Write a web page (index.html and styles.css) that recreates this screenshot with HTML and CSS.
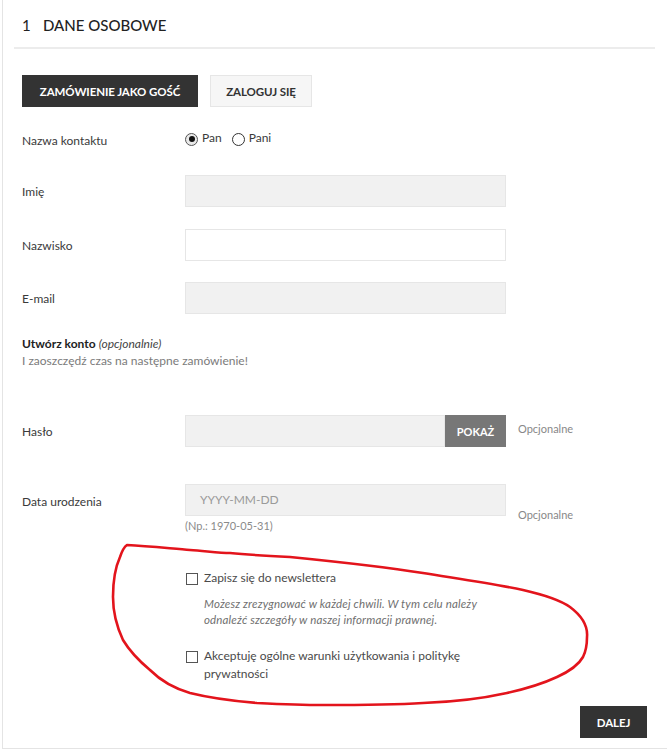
FILE: index.html
```html
<!DOCTYPE html>
<html lang="pl">
<head>
<meta charset="utf-8">
<title>Dane osobowe</title>
<link rel="stylesheet" href="styles.css">
</head>
<body>
<div class="page">
  <div class="card">
    <h1 class="step-title"><span class="step-num">1</span>DANE OSOBOWE</h1>
    <div class="content">
      <div class="tabs">
        <button class="btn btn-dark">ZAMÓWIENIE JAKO GOŚĆ</button>
        <button class="btn btn-light">ZALOGUJ SIĘ</button>
      </div>

      <div class="row row-radio">
        <div class="label">Nazwa kontaktu</div>
        <div class="radios">
          <span class="radio checked"></span><span class="radio-text">Pan</span>
          <span class="radio"></span><span class="radio-text">Pani</span>
        </div>
      </div>

      <div class="row row-imie">
        <div class="label">Imię</div>
        <div class="input gray"></div>
      </div>
      <div class="row row-nazwisko">
        <div class="label">Nazwisko</div>
        <div class="input white"></div>
      </div>
      <div class="row row-email">
        <div class="label">E-mail</div>
        <div class="input gray"></div>
      </div>

      <div class="account">
        <div class="account-title"><strong>Utwórz konto</strong> <em>(opcjonalnie)</em></div>
        <div class="account-sub">I zaoszczędź czas na następne zamówienie!</div>
      </div>

      <div class="row row-haslo">
        <div class="label">Hasło</div>
        <div class="input-group">
          <div class="input gray grow"></div>
          <button class="btn-show">POKAŻ</button>
        </div>
        <div class="hint hint-pass">Opcjonalne</div>
      </div>

      <div class="row row-date">
        <div class="label">Data urodzenia</div>
        <div class="field-col">
          <div class="input gray placeholder">YYYY-MM-DD</div>
          <div class="example">(Np.: 1970-05-31)</div>
        </div>
        <div class="hint hint-date">Opcjonalne</div>
      </div>

      <div class="checks">
        <div class="check-row">
          <span class="checkbox"></span>
          <span class="check-text">Zapisz się do newslettera</span>
        </div>
        <div class="check-note">Możesz zrezygnować w każdej chwili. W tym celu należy<br>odnaleźć szczegóły w naszej informacji prawnej.</div>
        <div class="check-row check-row-2">
          <span class="checkbox"></span>
          <span class="check-text">Akceptuję ogólne warunki użytkowania i politykę<br>prywatności</span>
        </div>
      </div>

      <div class="footer">
        <button class="btn btn-dark btn-next">DALEJ</button>
      </div>
    </div>
  </div>
  <svg class="annotation" width="667" height="750" viewBox="0 0 667 750" aria-hidden="true">
    <path d="M127 545 C150 546 175 549 190 550 C205 551 220 553 230 553 C250 555 270 556 290 557 C340 562 385 567 423 573 C460 579 495 584 523 590 C545 595 560 600 570 607 C582 616 588 626 587 637 C587 645 586 651 583 657 C578 666 568 672 557 677 C542 684 525 689 507 693 C480 699 452 702 423 703 C390 705 355 705 323 705 C300 705 278 704 257 703 C233 701 210 698 190 693 C173 688 160 680 150 670 C138 660 129 650 123 640 C116 625 113 612 113 597 C113 582 115 568 120 557 C122 551 124 547 127 545 Z" fill="none" stroke="#e3141c" stroke-width="2.6" stroke-linejoin="round"/>
  </svg>
</div>
</body>
</html>
```

FILE: styles.css
```css
* { box-sizing: border-box; }

html, body {
  margin: 0;
  padding: 0;
  background: #ffffff;
}

body {
  font-family: "Lato", "Liberation Sans", sans-serif;
  color: #3a3a3a;
  font-size: 12px;
}

.page {
  position: relative;
  width: 667px;
  height: 750px;
  overflow: hidden;
}

.card {
  margin-left: 2px;
  border-left: 1px solid #e4e4e4;
  border-bottom: 1px solid #e4e4e4;
  height: 749px;
}

.step-title {
  margin: 0 12px 0 11px;
  height: 49px;
  padding: 15px 0 0 8px;
  border-bottom: 2px solid #ececec;
  font-size: 15px;
  line-height: 20px;
  font-weight: 500;
  color: #222;
}

.step-num {
  display: inline-block;
  width: 21px;
  font-weight: 400;
}

.content {
  padding: 0 0 0 19px;
}

.tabs {
  display: flex;
  gap: 12px;
  margin-top: 26px;
}

.btn {
  font-family: "Lato", "Liberation Sans", sans-serif;
  font-size: 11.5px;
  font-weight: 700;
  height: 32px;
  padding: 0;
  cursor: pointer;
  letter-spacing: -0.1px;
}

.btn-dark {
  background: #333333;
  color: #ffffff;
  border: none;
  width: 176px;
}

.btn-light {
  background: #f6f6f6;
  color: #333;
  border: 1px solid #e6e6e6;
  width: 102px;
}

.row {
  display: flex;
  align-items: center;
}

.label {
  width: 163px;
  flex: none;
  font-size: 12px;
  color: #3a3a3a;
}

.row-radio {
  margin-top: 23px;
  height: 20px;
}

.radios {
  display: flex;
  align-items: center;
  margin-top: -2px;
}

.radio {
  width: 13px;
  height: 13px;
  border: 1px solid #333;
  border-radius: 50%;
  display: inline-block;
  position: relative;
  background: #fff;
}

.radio.checked {
  background: #e9e9e9;
  border-color: #555;
}

.radio.checked::after {
  content: "";
  position: absolute;
  left: 2.5px;
  top: 2.5px;
  width: 6px;
  height: 6px;
  border-radius: 50%;
  background: #111;
}

.radio-text {
  margin-left: 4px;
  margin-right: 10px;
  margin-top: -3px;
  font-size: 12px;
  color: #3a3a3a;
}

.input {
  width: 321px;
  height: 32px;
  border: 1px solid #e6e6e6;
  flex: none;
}

.input.gray { background: #f1f1f1; }
.input.white { background: #ffffff; }

.row-imie { margin-top: 25px; }
.row-nazwisko { margin-top: 22px; }
.row-email { margin-top: 21px; }

.account {
  margin-top: 22px;
}

.account-title {
  line-height: 16px;
  font-size: 12px;
  color: #222;
}

.account-title strong { font-weight: 700; }
.account-title em { font-weight: 400; color: #444; }

.account-sub {
  margin-top: 1px;
  line-height: 16px;
  color: #7b7b7b;
  font-size: 12px;
}

.row-haslo {
  margin-top: 46px;
}

.input-group {
  display: flex;
  width: 321px;
  height: 32px;
  flex: none;
}

.input.grow {
  width: auto;
  flex: 1;
}

.btn-show {
  width: 61px;
  height: 32px;
  border: none;
  background: #777777;
  color: #fff;
  font-family: "Lato", "Liberation Sans", sans-serif;
  font-weight: 700;
  font-size: 11px;
  padding: 0;
}

.hint {
  margin-left: 12px;
  font-size: 11px;
  color: #888;
}

.hint-pass {
  margin-top: -6px;
}

.row-date {
  margin-top: 37px;
  align-items: flex-start;
}

.row-date .label {
  margin-top: 10px;
}

.field-col {
  display: flex;
  flex-direction: column;
}

.placeholder {
  color: #9a9a9a;
  font-size: 12px;
  padding: 7px 0 0 14px;
}

.example {
  margin-top: 2px;
  line-height: 15px;
  font-size: 11px;
  color: #8a8a8a;
}

.hint-date {
  margin-top: 24px;
}

.checks {
  margin-left: 164px;
  margin-top: 39px;
}

.check-row {
  display: flex;
  align-items: flex-start;
}

.checkbox {
  width: 12px;
  height: 12px;
  border: 1.5px solid #555;
  flex: none;
  margin-top: 1px;
  background: #fff;
}

.check-text {
  margin-left: 6px;
  font-size: 12px;
  line-height: 18px;
  margin-top: -3px;
  color: #4a4a4a;
}

.check-note {
  margin: 9px 0 0 18px;
  font-style: italic;
  font-size: 11.5px;
  letter-spacing: 0.15px;
  line-height: 16px;
  color: #6f6f6f;
}

.check-row-2 {
  margin-top: 22px;
}

.footer {
  display: flex;
  justify-content: flex-end;
  padding-right: 20px;
  margin-top: 23px;
}

.btn-next {
  width: 67px;
}

.annotation {
  position: absolute;
  left: 0;
  top: 0;
  pointer-events: none;
}
```
